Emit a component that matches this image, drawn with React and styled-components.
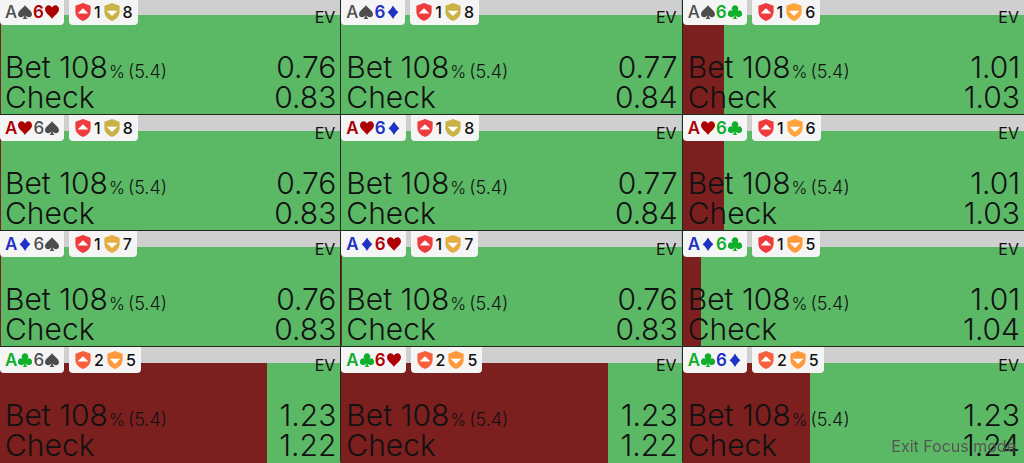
import React from "react";
import styled, { createGlobalStyle } from "styled-components";

const SUITS = {
    s: { color: "#4d4d4d", path: "M7 0C6 2.6 0 5.6 0 9.2 0 11 1.4 12.2 3.1 12.2 4.4 12.2 5.6 11.6 6.3 10.6 6.3 12.2 5.6 13.4 4.4 14H9.6C8.4 13.4 7.7 12.2 7.7 10.6 8.4 11.6 9.6 12.2 10.9 12.2 12.6 12.2 14 11 14 9.2 14 5.6 8 2.6 7 0Z" },
    h: { color: "#ad0000", path: "M7 14C5.4 10.8 0 8.2 0 4.2 0 2 1.6 0.2 3.6 0.2 5.2 0.2 6.4 1.2 7 2.6 7.6 1.2 8.8 0.2 10.4 0.2 12.4 0.2 14 2 14 4.2 14 8.2 8.6 10.8 7 14Z" },
    d: { color: "#1f31c4", path: "M7 0.6C8.2 3 10.2 5.4 12.4 7.3 10.2 9.2 8.2 11.6 7 14 5.8 11.6 3.8 9.2 1.6 7.3 3.8 5.4 5.8 3 7 0.6Z" },
    c: { color: "#0fae2b", path: "M7 0.2A3.2 3.2 0 0 1 9.3 5.7 3.4 3.4 0 1 1 7.7 10.2C7.7 12 8.4 13.3 9.6 14H4.4C5.6 13.3 6.3 12 6.3 10.2A3.4 3.4 0 1 1 4.7 5.7 3.2 3.2 0 0 1 7 0.2Z" },
};

const RED = "#ef3b3b";
const ORANGE_RED = "#f7603c";

const HANDS = [
    { cards: "As6h", up: [RED, 1], down: ["#c9b346", 8], fill: 0.3, bet: "0.76", check: "0.83" },
    { cards: "As6d", up: [RED, 1], down: ["#c9b346", 8], fill: 0, bet: "0.77", check: "0.84" },
    { cards: "As6c", up: [RED, 1], down: ["#ffa53c", 6], fill: 12, bet: "1.01", check: "1.03" },
    { cards: "Ah6s", up: [RED, 1], down: ["#c9b346", 8], fill: 0.3, bet: "0.76", check: "0.83" },
    { cards: "Ah6d", up: [RED, 1], down: ["#c9b346", 8], fill: 0, bet: "0.77", check: "0.84" },
    { cards: "Ah6c", up: [RED, 1], down: ["#ffa53c", 6], fill: 12, bet: "1.01", check: "1.03" },
    { cards: "Ad6s", up: [RED, 1], down: ["#e5ad42", 7], fill: 0.3, bet: "0.76", check: "0.83" },
    { cards: "Ad6h", up: [RED, 1], down: ["#e5ad42", 7], fill: 0.3, bet: "0.76", check: "0.83" },
    { cards: "Ad6c", up: [RED, 1], down: ["#ff9a3c", 5], fill: 5.3, bet: "1.01", check: "1.04" },
    { cards: "Ac6s", up: [ORANGE_RED, 2], down: ["#ff9a3c", 5], fill: 78.4, bet: "1.23", check: "1.22" },
    { cards: "Ac6h", up: [ORANGE_RED, 2], down: ["#ff9a3c", 5], fill: 78.4, bet: "1.23", check: "1.22" },
    { cards: "Ac6d", up: [ORANGE_RED, 2], down: ["#ff9a3c", 5], fill: 37.3, bet: "1.23", check: "1.24" },
];

const Card = ({ rank, suit }) => (
    <CardText $color={SUITS[suit].color} $light={suit === "s"}>
        {rank}
        <svg width="14" height="14" viewBox="0 0 14 14" aria-hidden="true">
            <path d={SUITS[suit].path} fill="currentColor" />
        </svg>
    </CardText>
);

const Shield = ({ color, down }) => (
    <svg width="16" height="18" viewBox="0 0 16 18" aria-hidden="true">
        <path d="M8 0L15.6 2.7V9C15.6 13 12.4 16.4 8 18 3.6 16.4 0.4 13 0.4 9V2.7Z" fill={color} />
        <path d={down ? "M2.6 7.8H13.4L8 13Z" : "M2.6 10.4H13.4L8 5.2Z"} fill="#fff" />
    </svg>
);

const Hand = ({ cards, up, down, fill, bet, check }) => (
    <Cell $fill={fill}>
        <Top>
            <Badge>
                <Card rank={cards[0]} suit={cards[1]} />
                <Card rank={cards[2]} suit={cards[3]} />
            </Badge>
            <Badge $ranks>
                <Shield color={up[0]} />
                <span>{up[1]}</span>
                <Shield color={down[0]} down />
                <span>{down[1]}</span>
            </Badge>
            <Ev>EV</Ev>
        </Top>
        <Actions>
            <Action>
                <Label>
                    Bet 108<Percent>%</Percent><Size>(5.4)</Size>
                </Label>
                <span>{bet}</span>
            </Action>
            <Action>
                <Label>Check</Label>
                <span>{check}</span>
            </Action>
        </Actions>
    </Cell>
);

const App = () => {
    return (
        <>
            <GlobalStyle />
            <Board>
                {HANDS.map(h => <Hand key={h.cards} {...h} />)}
            </Board>
            <ExitButton type="button">Exit Focus mode</ExitButton>
        </>
    );
};

const GlobalStyle = createGlobalStyle`
    body {
        margin: 0;
        overflow: hidden;
        background: #5bb966;
        font-family: Inter, "Liberation Sans", sans-serif;
        color: #111;
    }
`

const Board = styled.main`
    display: grid;
    grid-template-columns: repeat(3, 1fr);
    grid-auto-rows: 1fr;
    height: calc(100vh + 1px);
    margin-top: -1px;
`

const Cell = styled.section`
    display: flex;
    flex-direction: column;
    justify-content: space-between;
    border-right: 1px solid #1c2b1e;
    border-bottom: 1px solid #1c2b1e;
    background:
        linear-gradient(#cfcfcf, #cfcfcf) top / 100% 16px no-repeat,
        linear-gradient(to right, #7c1f1f ${p => p.$fill}%, #5bb966 ${p => p.$fill}%);

    &:nth-child(3n) {
        border-right: none;
    }

    &:nth-last-child(-n + 3) {
        border-bottom-color: transparent;
    }
`

const Top = styled.header`
    display: flex;
    align-items: flex-start;
    gap: 5px;
`

const Badge = styled.div`
    display: flex;
    align-items: center;
    gap: ${p => (p.$ranks ? 3 : 1)}px;
    height: 26px;
    padding: ${p => (p.$ranks ? "0 5px 0 6px" : "0 5px")};
    border-radius: 0 0 4px 4px;
    background: #f5f5f5;
    font-size: 16px;
    font-weight: 500;
    line-height: 24px;

    span {
        padding-bottom: 1px;
    }
`

const CardText = styled.span`
    display: flex;
    align-items: center;
    gap: 1px;
    color: ${p => p.$color};
    font-size: 17px;
    font-weight: ${p => (p.$light ? 500 : 600)};
`

const Ev = styled.span`
    margin-left: auto;
    padding: 8px 5px 0 0;
    font-size: 16px;
    line-height: 20px;
`

const Actions = styled.div`
    padding: 0 4px 2px;
`

const Action = styled.div`
    display: flex;
    justify-content: space-between;
    font-size: 30px;
    font-weight: 300;
    line-height: 30px;
    white-space: nowrap;
`

const Label = styled.span`
    padding-left: 1px;
`

const Percent = styled.small`
    margin-left: 1px;
    font-size: 17px;
    line-height: 1;
`

const Size = styled.small`
    margin-left: 3px;
    font-size: 18px;
    line-height: 1;
`

const ExitButton = styled.button`
    position: fixed;
    right: 8px;
    bottom: 7px;
    padding: 0;
    border: none;
    background: none;
    color: #555;
    font-family: inherit;
    font-size: 16px;
    line-height: 20px;
    cursor: pointer;
`

export default App;
